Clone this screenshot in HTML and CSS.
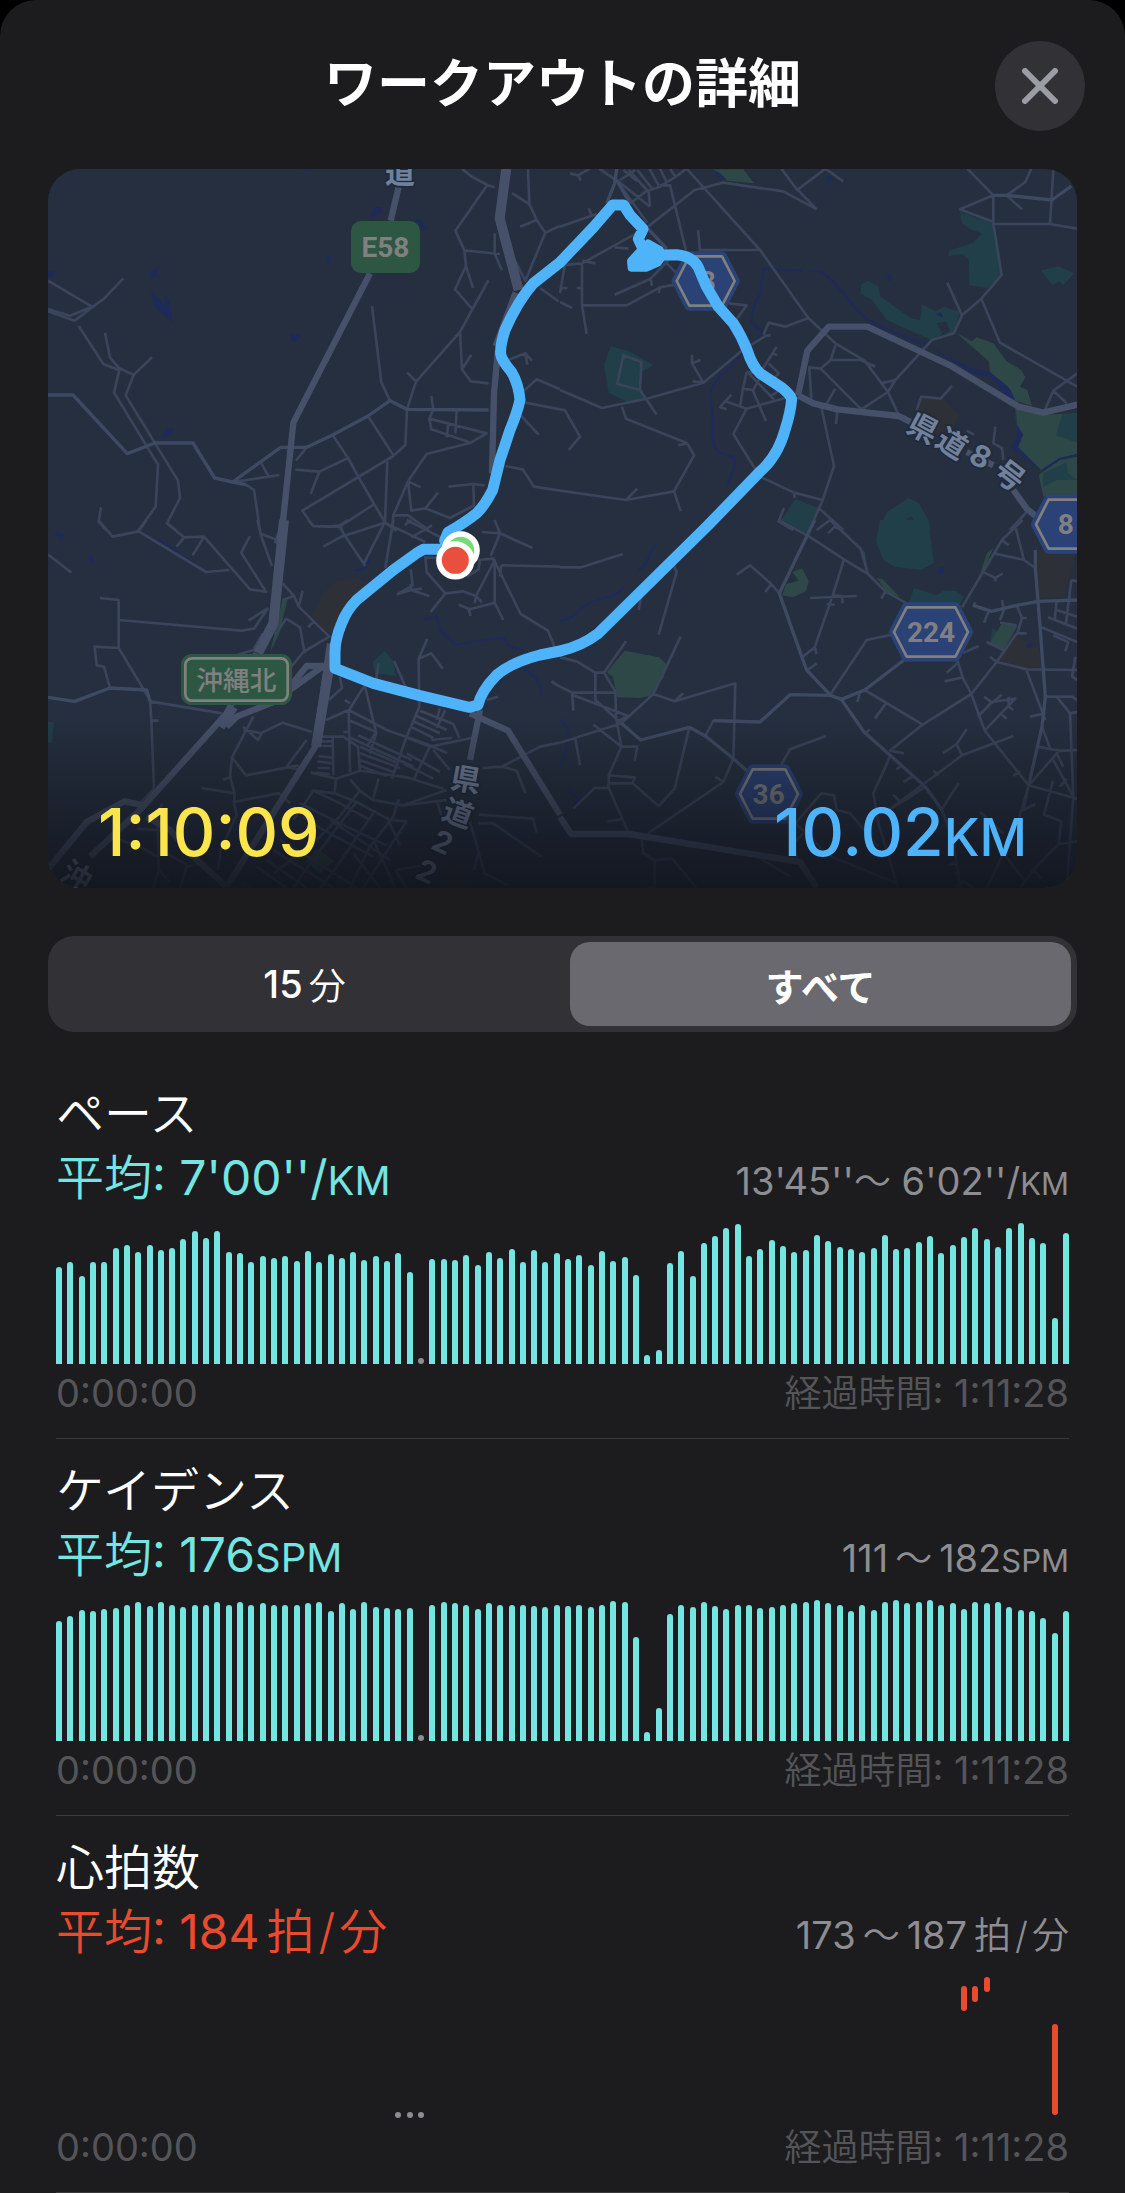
FILE: index.html
```html
<!DOCTYPE html>
<html lang="ja">
<head>
<meta charset="utf-8">
<meta name="viewport" content="width=device-width, initial-scale=1">
<title>ワークアウトの詳細</title>
<link rel="stylesheet" href="styles.css">
</head>
<body>
<main class="sheet">
  <header class="header">
    <h1 class="title">ワークアウトの詳細</h1>
    <button class="close" type="button" aria-label="閉じる">
      <svg viewBox="0 0 36 36" aria-hidden="true"><path d="M3 3 33 33M33 3 3 33"/></svg>
    </button>
  </header>

  <section class="map" aria-label="ルート">
    <svg class="map-art" viewBox="0 0 3087 2157" aria-hidden="true">
      <defs>
        <linearGradient id="shade" x1="0" y1="0" x2="0" y2="1">
          <stop offset="0" stop-color="#10131b" stop-opacity="0"/>
          <stop offset="1" stop-color="#10131b" stop-opacity=".85"/>
        </linearGradient>
      </defs>
      <rect class="land" width="3087" height="2157"/>

      <!-- north-west -->
      <g transform="translate(-24 -27)">
        <path class="water" d="M988 174 1003 142 1024 142 1022 160ZM1128 176 1140 176 1152 196 1168 205 1148 212ZM858 290 868 286 876 308 858 310ZM327 338 358 318 356 330 345 338 358 348 342 350 334 361ZM330 388 342 398 345 410 362 418 380 450 374 406 388 424 397 486 345 440ZM750 518 766 526 778 520 782 530 768 547 754 540ZM24 334 40 332 46 342 36 350 24 350ZM362 834 366 824 386 804 400 808 398 820 378 832ZM788 26 816 26 814 31 792 31Z"/>
        <path class="minor" d="M24 362 156 440 90 467 24 447M24 454 104 482 156 442 192 416 250 355M116 498 190 612 238 631 222 698 354 914 347 1040 290 1118M195 518 210 593 238 625 281 645 257 706 414 962 420 1014 381 1090 410 1112M281 645 336 592M183 1042 176 1085 200 1112M1266 26 1292 48 1342 75 1364 82M1342 75 1246 212 1273 271 1380 282M1273 271 1278 318 1245 388 1296 446M1278 318 1299 384M1345 361 1296 450 1260 516 1128 665 1101 748 1096 855 1060 888 787 1052 820 1098 899 1100 1003 1032M1260 516 1266 628 1292 664 1346 670M1266 628 1294 584M1101 637 1128 664M996 438 1024 667 1050 722 1101 750M984 768 1060 886M878 825 924 894 956 952 1035 1088 1070 1112M924 894 838 935 812 1002M838 935 766 929M768 902 800 862M578 966 686 950 718 945M664 910 686 950M618 974 642 990 660 1112M1042 904 1035 1088M1292 848 1160 882 1104 964 1060 1066 1056 1112M1104 964 1142 982M1104 964 1114 1052 1156 1045 1230 1074 1302 1036 1300 972 1334 976M1300 972 1225 980M1156 1045 1194 998M1060 1066 1104 1066 1166 1110M1174 708 1180 748 1168 776 1340 820 1292 848 1174 808 1168 776M1250 752 1246 820M1225 790 1220 832M1364 220 1364 282 1386 330M1464 26 1468 132 1490 180 1516 218 1456 362 1424 300M1416 100 1468 132M1490 180 1440 200M1516 218 1560 198M1500 384 1556 424M1400 602 1456 580 1476 602M1456 580 1462 614M1452 692 1490 658 1560 688M1456 728 1560 748M1444 768 1496 824M1396 918 1448 928 1482 980 1560 992M899 1100 905 1112"/>
        <path class="medium" d="M24 705 99 705 262 881 345 849 459 849 524 954 578 966 722 862 800 862 878 825 984 768 1050 722 1101 748 1346 750M578 966 618 974"/>
        <path class="major" d="M1076 80 1052 182M990 340 760 788 726 1112"/>
        <path class="trunk" d="M1399 26 1379 175 1436 390M1432 400 1372 560"/>
        <path class="major" d="M1374 570 1362 700 1356 940"/>
      </g>

      <!-- north-east -->
      <g transform="translate(1536 -27)">
        <path class="wood" d="M1200 155 1296 190 1325 345 1284 384 1228 376 1226 296 1206 282 1164 288 1168 272 1240 248 1266 220 1228 206 1206 190ZM1442 332 1494 318 1542 340 1510 376 1498 364 1478 376ZM904 372 924 362 956 380 960 408 1004 440 1056 476 1080 480 1086 432 1126 454 1152 440 1200 456 1182 520 1150 522 1114 540 980 480 936 420 902 400ZM152 558 208 574 280 616 240 640 238 690 262 712 200 726 146 698 132 614ZM706 1016 776 1044 752 1110 664 1080ZM956 1110 980 1056 1046 1014 1076 1028 1108 1086 1110 1110Z"/>
        <path class="grass" d="M458 28 550 28 582 70 500 62ZM1190 520 1236 544 1250 532 1300 550 1340 604 1384 630 1396 652 1380 680 1402 690 1416 738 1366 722 1344 680 1290 636 1286 604ZM1366 746 1452 764 1552 760 1552 880 1496 900 1446 932 1374 862 1386 824 1368 790ZM1436 944 1500 900 1552 890 1552 1010 1450 1010Z"/>
        <path class="wood" d="M1506 764 1552 760 1552 848 1488 826ZM1450 940 1520 906 1524 940 1552 960 1490 960 1450 980Z"/>
        <path class="urban" d="M1080 708 1150 718 1200 764 1180 800 1140 830 1080 780Z"/>
        <path class="land" d="M1130 490 1158 484 1170 512 1148 524ZM1040 1076 1054 1068 1072 1110 1044 1110Z"/>
        <path class="stream" d="M610 325 726 332M748 332 784 336C840 370 870 440 920 476S1050 530 1100 558M610 325 602 400 584 430 572 484 610 518 520 610C480 650 450 670 452 720 470 800 440 850 480 880L522 892 524 920 502 974M1446 932 1500 896 1550 886"/>
        <path class="water" d="M1098 556 1240 628 1286 634 1352 690 1366 722 1344 712 1290 650 1236 638ZM1368 750 1368 790 1390 824 1374 862 1440 930 1396 896 1354 858 1372 832ZM1128 464 1142 456 1150 472ZM980 342 992 342 992 362 982 362ZM796 60 808 46 816 56 804 70ZM460 28 480 40 502 60 480 52Z"/>
        <path class="minor" d="M30 40 54 46 90 26M54 46 62 62M0 200 110 162M86 144 94 164M118 26 170 62 262 188M180 60 226 30M170 60 270 140M190 30 232 64M206 30 266 96 270 140M232 30 275 84M268 26 296 76M300 26 320 66M330 26 346 50M210 130 258 94 300 80 350 48 380 26M300 76 330 76 378 272M264 200 404 90 490 68 670 94 770 148M380 26 600 270 745 474 826 550 914 602 984 696 1016 766M664 26 712 90 796 26 850 64M712 88 770 148M414 210 420 270 600 270M0 316 66 310 240 214M66 310 66 436 200 436 300 382 346 374M66 436 80 522M164 262 206 266M66 302 106 310M300 290 350 340M326 300 272 356 164 404M272 356 276 378M300 382 296 400M14 318 0 400M0 384 22 384M50 384 66 384M0 426 36 444M506 430 560 436 528 480M620 526 545 572 430 668 260 716 126 744 0 690M430 668 396 610 422 600M396 584 396 610M398 664 430 668M190 586 244 606 240 690 172 672ZM240 690 290 764M186 740 198 776 382 850 402 886 342 994 362 1054M354 856 382 850M342 994 198 1020 0 992M198 1020 232 986M0 748 14 750 60 830 26 870M620 526 632 526M610 524 626 488 676 500 745 474M560 636 548 690 540 742M560 636 600 640 650 560M640 580 652 586M626 610 656 640 632 664M566 640 642 718M478 744 514 704M480 742 500 748M496 724 560 746 690 710M560 746 520 822 600 950 702 998 788 1020 822 918 784 742M578 690 618 784M546 686 580 690 600 652M630 710 660 690M702 998 704 1014M788 1020 748 1110M776 1044 850 1110M672 1044 656 1084 700 1110M826 556 812 600 782 626 904 748 984 696 1006 660 964 670M812 600 902 600 946 620M782 626 748 622 754 716M826 686 796 738M832 750 828 792M1006 660 1116 540 1182 520 1206 466 1264 416 1325 345 1300 192 1300 106 1222 26M1206 466 1162 368M1300 106 1200 148 1300 186M1264 416 1320 548 1552 680M1300 192 1470 192 1552 206M1470 192 1480 30M1340 106 1396 66 1414 26M1340 106 1386 148M1070 750 1084 710 1142 716 1176 678M1450 760 1480 692 1552 640M1480 692 1520 730M1306 800 1300 850 1326 864 1330 900M1220 812 1242 824M1400 1056 1350 1110M820 1100 850 1110"/>
        <path class="medium" d="M1300 106 1340 106 1476 120 1534 78M170 26 164 70 140 130M170 60 210 130M264 206 320 266"/>
        <path class="major" d="M714 706 742 572 806 500 922 500 1170 616 1376 740 1450 758 1552 734M714 706 760 730 832 748 1016 768 1080 800M1220 876 1300 916M1360 990 1400 1046 1430 1070"/>
      </g>

      <!-- south-west -->
      <g transform="translate(-24 1053)">
        <path class="urban" d="M814 290 850 220 890 182 950 174 990 196 930 250 880 340 850 330Z"/>
        <path class="wood" d="M998 426 1034 392 1060 424 1068 468 1004 460ZM24 606 42 606 36 668 24 668ZM570 1104 610 1080 640 1104Z"/>
        <path class="grass" d="M728 234 742 240 716 346 690 396 704 340ZM796 1024 832 986 882 1022 840 1062Z"/>
        <path class="urban" d="M1200 1104 1210 1050 1240 1036 1290 1104Z"/>
        <path class="water" d="M44 46 52 36 72 46 66 60ZM144 108 154 106 162 128 152 132ZM970 138 990 118 992 126 978 144Z"/>
        <path class="stream" d="M354 58 500 156M942 152 980 144M1152 298 1190 290 1200 330 1246 374 1390 352 1404 376 1450 392M1450 446C1490 470 1506 490 1504 526"/>
        <path class="minor" d="M24 104 94 158M174 0 218 50 296 34 320 0M296 34 498 156 568 150M378 8 432 52 492 50 630 208 682 216M432 52 410 80M492 50 458 106M652 0 664 50 696 138M664 42 706 58M630 48 604 98 676 212M180 234 236 240 236 384 330 540 334 600 342 806 300 850M236 300 604 332 642 326 684 264M626 302 684 264M236 384 164 380 170 436 192 440 210 504M330 544 546 580M334 602 356 602M804 0 820 18 870 20 900 16 910 40 976 138M900 16 924 0M1034 8 900 52 850 80M1034 8 972 130M1034 8 1156 66M1060 0 1036 144M1094 16 1114 0M1114 52 1176 16M1100 0 1210 56M728 190 762 228 776 260 868 350 790 396 754 440M762 228 728 240M776 260 788 212M804 322 822 304M738 296 780 322 794 400M706 346 738 296M668 340 640 390 594 404M900 470 906 504 866 540M610 620 654 660 666 638 728 608 816 636M664 640 610 630M640 590 576 712 570 770 584 820 582 850 590 884 542 990 534 1050M576 712 618 766 776 736M800 660 740 740 780 750M550 780 576 768M484 804 584 820M582 846 716 820 750 850M366 852 352 886 356 1050 340 1104M356 1050 388 1084M290 926 370 932M1156 108 1160 156 1216 220 1268 214 1308 228 1326 248M1216 220 1172 276M1112 148 1118 196 1074 222 1112 210 1168 228M1112 210 1112 192M1112 210 1146 206M1256 254 1290 268 1364 248 1364 120 1308 228 1304 250M1286 268 1292 288M1364 248 1390 300M1156 112 1230 116M1310 120 1364 116M1364 0 1380 40 1352 108M1326 36 1380 40 1478 84M1358 112 1442 282 1524 332 1546 386M1384 136 1560 140M1384 136 1380 170M1320 120 1316 148 1280 170M1162 356 1136 416 1138 560 1096 660M1136 416 1174 400 1208 446M1062 422 1098 504M1016 430 1008 480M974 496 926 572 930 756M974 496 1008 636 980 680M858 600 926 570 1040 630 1160 672 1222 700M926 600 1008 636M914 540 930 550M910 636 926 636M930 652 1010 690 1120 740M954 646 1116 720M840 650 910 650 954 680 960 754M878 650 880 766M840 664 878 664M840 678 878 678M836 708 878 714M832 724 874 730M832 744 870 744M826 758 870 762M960 680 1070 728M960 700 1080 744M960 720 1060 756M956 736 1040 768M1096 660 1056 776M1010 636 990 700M1140 572 1240 612 1258 654M1130 588 1220 630M1120 604 1200 640M1112 620 1180 654M1200 564 1190 600M1216 570 1190 624M1104 654 1170 680 1296 654M1170 680 1120 780M1174 660 1236 654M1180 690 1230 750M1100 700 1200 756M1090 730 1180 776M812 758 888 776 960 752 1100 772 1210 806M888 776 884 820 820 812 760 900M884 820 950 846 1050 900 1100 904M930 778 960 812 998 840 1090 856 1220 840M998 840 1016 776M1090 856 1220 810M1076 838 1060 890 990 980 930 1104M960 812 890 900 820 970 700 1060M950 846 870 950 790 1060 760 1104M1000 880 890 1040 840 1104M820 812 900 850 990 900M780 850 900 910 1040 976M790 890 850 930 1000 1010M870 900 1050 1020M720 960 820 1020 950 1104M700 990 880 1104M680 1020 800 1104M650 1040 740 1104M1100 904 1030 1010 970 1104M1040 890 1080 976M1000 960 1066 1104M940 1000 1020 1104M1328 744 1386 740 1500 680 1560 668M1386 740 1430 752 1456 820M1290 906 1316 996 1302 1050M1316 884 1478 896 1490 938M1316 910 1360 910 1504 1010M1316 996 1334 1060 1404 1096M1190 840 1204 886M1340 540 1374 530M1534 484 1560 500M1070 1050 1180 1030M1066 1050 1100 1104M420 1104 440 1040 480 1030M380 1000 440 1034M240 960 300 980 350 1010"/>
        <path class="medium" d="M24 532 104 544 210 504 320 510 330 544M730 0 706 70"/>
        <path class="major" d="M560 620 590 590 700 546 850 438 800 438 740 512M870 370 826 680 560 1100M730 0 700 300 660 396M650 400 560 580 300 870 150 1010M24 1048 140 906 254 844 310 856M320 890 390 930 460 1010 560 1100M1320 570 1290 720M1290 580 1404 632 1560 884"/>
        <path class="trunk" d="M732 0 700 310 654 400M580 560 540 620M866 450 828 680"/>
      </g>

      <!-- south-east -->
      <g transform="translate(1536 1053)">
        <path class="wood" d="M668 0 760 0 742 42ZM960 0 1104 0 1122 128 1084 150 1004 140 970 120 948 64ZM1062 204 1130 226 1150 212 1186 212 1212 230 1196 256 1046 250ZM1296 324 1320 340 1290 370Z"/>
        <path class="grass" d="M194 392 298 412 318 432 312 470 270 528 240 534 172 532 158 470 140 456ZM698 156 726 144 746 184 738 214 700 232 666 226 678 192 716 182ZM950 174 966 176 1020 232 980 216ZM1326 310 1372 318 1330 392 1288 372ZM1280 100 1300 84 1250 196ZM900 86 914 96 924 160Z"/>
        <path class="urban" d="M1428 90 1552 84 1510 232 1434 232ZM1370 350 1438 386 1444 444 1384 440 1312 420Z"/>
        <path class="water" d="M1138 142 1152 142 1150 160 1136 162ZM1400 370 1416 374 1418 384 1400 384Z"/>
        <path class="stream" d="M0 302C50 300 50 260 100 244S170 230 190 202M236 150C280 120 260 90 290 76M0 600C40 620 20 700 0 740M20 806 56 836 40 860M1526 1050 1530 1000 1552 994"/>
        <path class="minor" d="M0 142 64 142 188 102M340 132 350 156 296 344M246 220 236 270M198 364 132 458 166 514 168 590 184 680 146 766 146 804 206 940M0 412 50 424 106 458 132 458M106 458 106 540 184 610M0 500 36 518 166 518M36 518 40 572M36 524 204 588 168 606M100 614 184 680 232 680 224 722M362 350 280 522 184 610 0 668M280 522 344 544 526 490 520 716 490 786 264 940M344 544 370 520M46 656 60 736M388 622 344 806 296 858 218 790 146 790M146 766 224 772 218 790M40 866 104 804 146 804M142 904 184 898M436 648 460 602 600 606M490 786 466 770M664 734 690 688 798 648M530 164 570 136 634 192 658 220M634 192 616 216M656 0 742 46 852 118 924 162M852 118 818 226 764 382 726 412M750 234 890 228M818 226 846 228 848 250M800 252 824 254M764 382 770 402M812 522 920 360 996 344M740 452 770 430M804 40 830 14M770 30 810 0 902 86 924 162 976 214 1040 250M976 214 964 236M892 546 900 516 914 510 1088 614 1234 522 1310 426 1400 448 1552 450M978 550 944 596M1088 614 990 692 1032 700M990 710 940 820 956 912 1014 1104M1154 484 1208 472M1160 458 1192 430M1192 420 1208 472 1234 522 1274 632 1406 796 1376 900M1406 796 1552 836M1254 590 1296 546 1366 536 1274 632M1272 530 1296 548 1326 524M1346 530 1346 560 1360 570M1326 584 1340 596M1190 672 1220 628M1148 700 1190 672 1206 706 1360 648M1206 706 986 870M1120 752 1136 766M1196 790 1144 870M916 640 930 628M1010 748 1026 736M1030 786 1060 768M1000 824 1020 846M986 870 1060 824 1096 800M1388 0 1326 60 1206 262M1326 60 1346 76M1366 20 1392 120 1426 144M1302 100 1392 120M1270 156 1306 174 1328 160M1306 174 1306 184M1240 260 1246 246M1272 308 1286 274M1326 240 1332 270 1320 300M1370 256 1386 294 1372 340 1400 340M1386 294 1400 294M1320 308 1370 316M1290 410 1310 426 1370 340M1280 366 1330 390M1210 398 1256 378M1440 320 1552 366M1480 346 1524 366 1516 394M1464 292 1552 326M1490 240 1484 300M1534 180 1518 310M1490 270 1552 290M1534 180 1552 184M1400 452 1456 600M1456 530 1536 530 1552 540M1490 530 1530 580 1552 576M1410 590 1456 580M1530 580 1540 830 1520 1104M1430 680 1498 692 1552 690M1498 692 1406 796M1480 720 1540 830M1500 800 1520 776M1446 620 1470 684M1406 796 1390 870 1426 852M1478 784 1452 884 1504 904 1496 972 1420 1050 1380 1104M1552 964 1496 972M1376 900 1330 1000 1280 1104M1330 1000 1396 1084M1420 1050 1444 1076M1260 876 1330 940M1146 870 1180 960 1200 1104M1166 1036 1190 1026M1184 1100 1210 1084 1240 1104M1184 1060 1200 1060M706 910 784 820 822 826 830 870 870 880 956 980M706 910 760 960 800 1004 1010 1090M730 940 700 970 712 1020M244 950 250 1000 284 1020 284 1104 262 1104M284 1020 336 1016 410 1104M600 1016 692 1070M1360 768 1380 754M1546 410 1536 470 1552 480M1490 700 1510 740"/>
        <path class="medium" d="M764 0 658 220 726 412 740 450 812 526 844 538 912 636 1060 768 1096 800 1146 870M812 526 690 524 600 606 460 602M844 538 914 510 1040 414M184 610 242 660 388 622 436 648 520 716 560 752M1240 256 1294 274 1370 256 1434 244 1552 240M1426 90 1426 144 1440 320 1456 530 1446 620 1406 796"/>
        <path class="major" d="M0 892 34 942 206 942 720 1026 770 1104"/>
      </g>

      <g class="road-name">
        <text x="1056" y="42" text-anchor="middle">道</text>
        <text transform="translate(2625 778) rotate(28)" text-anchor="middle" dy="32">県</text>
        <text transform="translate(2712 824) rotate(32)" text-anchor="middle" dy="32">道</text>
        <text transform="translate(2798 862) rotate(28)" text-anchor="middle" dy="32">8</text>
        <text transform="translate(2884 920) rotate(38)" text-anchor="middle" dy="32">号</text>
        <text transform="translate(1254 1832) rotate(10)" text-anchor="middle" dy="32">県</text>
        <text transform="translate(1230 1934) rotate(20)" text-anchor="middle" dy="32">道</text>
        <text transform="translate(1184 2020) rotate(25)" text-anchor="middle" dy="32">2</text>
        <text transform="translate(1136 2108) rotate(25)" text-anchor="middle" dy="32">2</text>
        <text transform="translate(86 2122) rotate(30)" text-anchor="middle" dy="32">沖</text>
      </g>

      <g class="shield-green">
        <rect x="909" y="156" width="207" height="156" rx="30"/>
        <text x="1012" y="265">E58</text>
        <rect x="399" y="1455" width="333" height="153" rx="32"/>
        <rect class="frame" x="412" y="1468" width="307" height="127" rx="20"/>
        <text class="place" x="565" y="1562">沖縄北</text>
      </g>
      <g class="shield-blue">
        <path class="edge" d="M1924 262H2022L2060 336 2022 410H1924L1886 336Z"/>
        <path d="M1924 262H2022L2060 336 2022 410H1924L1886 336Z"/>
        <text x="1979" y="366">8</text>
        <path class="edge" d="M3002 992H3122L3160 1066 3122 1139H3002L2964 1066Z"/>
        <path d="M3002 992H3122L3160 1066 3122 1139H3002L2964 1066Z"/>
        <text x="3053" y="1094">8</text>
        <path class="edge" d="M2576 1315H2722L2760 1389 2722 1463H2576L2538 1389Z"/>
        <path d="M2576 1315H2722L2760 1389 2722 1463H2576L2538 1389Z"/>
        <text x="2649" y="1419">224</text>
        <path class="edge" d="M2114 1801H2212L2250 1875 2212 1949H2114L2076 1875Z"/>
        <path d="M2114 1801H2212L2250 1875 2212 1949H2114L2076 1875Z"/>
        <text x="2162" y="1904">36</text>
      </g>

      <path class="route" d="M1200 1142 1181 1140 1126 1141 1110 1150 1036 1203 926 1293Q895 1325 881 1363 861 1410 861 1450L861 1498 976 1543 1116 1580 1264 1615 1290 1608Q1300 1565 1346 1518 1390 1480 1476 1458L1536 1446Q1600 1432 1650 1394L1976 1073 2136 908Q2190 860 2211 783 2228 730 2231 690 2226 676 2200 655L2136 613Q2112 590 2098 545 2080 500 2056 463L2011 413 1974 350 1950 293Q1932 262 1888 257L1830 258 1790 250 1771 210 1785 180 1746 138 1727 108 1694 108 1636 175 1536 280 1456 343Q1410 395 1371 483 1356 530 1358 555 1360 572 1390 608 1412 645 1416 693 1408 730 1386 783L1356 873 1334 963Q1310 1010 1286 1033 1250 1062 1200 1090L1190 1115"/>
      <path class="blob" d="M1800 222 1836 242 1844 262 1830 282 1796 297 1750 297 1748 276 1772 250Z"/>
      <rect y="1640" width="3087" height="517" fill="url(#shade)"/>
      <g class="pin">
        <circle class="start" cx="1238" cy="1144" r="49"/>
        <circle class="finish" cx="1222" cy="1174" r="49"/>
      </g>
    </svg>
    <div class="map-stats">
      <span class="duration">1:10:09</span>
      <span class="distance">10.02<span class="unit">KM</span></span>
    </div>
  </section>

  <div class="segments" role="group" aria-label="表示範囲">
    <button type="button" class="segment" aria-pressed="false"><span>15</span><span class="kanji">分</span></button>
    <button type="button" class="segment selected" aria-pressed="true">すべて</button>
  </div>

  <section class="metric teal">
    <h2 class="name">ペース</h2>
    <div class="summary">
      <p class="average">平均<span class="value">: 7'00''/<span class="unit">KM</span></span></p>
      <p class="range">13'45''<span class="kanji">〜</span> 6'02''/<span class="unit">KM</span></p>
    </div>
    <div class="chart" data-series="pace"></div>
    <div class="times"><span>0:00:00</span><span><span class="kanji">経過時間</span>: 1:11:28</span></div>
  </section>

  <section class="metric teal">
    <h2 class="name">ケイデンス</h2>
    <div class="summary">
      <p class="average">平均<span class="value">: 176<span class="unit">SPM</span></span></p>
      <p class="range">111<span class="kanji wave">〜</span>182<span class="unit">SPM</span></p>
    </div>
    <div class="chart" data-series="cadence"></div>
    <div class="times"><span>0:00:00</span><span><span class="kanji">経過時間</span>: 1:11:28</span></div>
  </section>

  <section class="metric red">
    <h2 class="name">心拍数</h2>
    <div class="summary">
      <p class="average">平均<span class="value">: 184</span><span class="per">拍<span class="slash">/</span>分</span></p>
      <p class="range">173<span class="kanji wave">〜</span>187<span class="kanji per">拍<span class="slash">/</span>分</span></p>
    </div>
    <div class="chart" data-series="heart"></div>
    <div class="times"><span>0:00:00</span><span><span class="kanji">経過時間</span>: 1:11:28</span></div>
  </section>
</main>
<script src="charts.js"></script>
</body>
</html>
```

FILE: styles.css
```css
* { box-sizing: border-box; }

body {
  margin: 0;
  background: #000;
  color: #fff;
  font-family: Inter, "Noto Sans CJK JP", sans-serif;
}

button {
  border: 0;
  padding: 0;
  color: inherit;
  font: inherit;
  cursor: pointer;
}

h1, h2, p { margin: 0; font-weight: 400; }

.sheet {
  overflow: hidden;
  border-radius: 36px 36px 0 0;
  background: #1c1c1e;
}

.header {
  display: grid;
  grid-template-columns: 90px 1fr 90px;
  align-items: center;
  padding: 41px 40px 38px;
}

.title {
  grid-column: 2;
  text-align: center;
  font-size: 53px;
  line-height: 82px;
  font-weight: 700;
  padding-bottom: 4px;
}

.close {
  display: grid;
  place-items: center;
  width: 90px;
  height: 90px;
  border-radius: 50%;
  background: #313136;
}

.close svg {
  width: 36px;
  height: 36px;
  fill: none;
  stroke: #9d9da5;
  stroke-width: 6;
  stroke-linecap: round;
}

.map {
  position: relative;
  margin: 0 48px;
  border-radius: 32px;
  overflow: hidden;
}

.map-art { display: block; width: 100%; }

.land { fill: #252f3f; }
.wood { fill: #203f48; }
.grass { fill: #2d4846; }
.urban { fill: #2e3038; }
.water { fill: #1e2a5c; }

.stream, .minor, .medium, .major, .trunk, .route {
  fill: none;
  stroke-linejoin: round;
}

.stream { stroke: #1e2a5c; stroke-width: 6; }
.minor { stroke: #3a445a; stroke-width: 8; }
.medium { stroke: #3e4a62; stroke-width: 10; }
.major { stroke: #465169; stroke-width: 19; }
.trunk { stroke: #465169; stroke-width: 30; }

.route { stroke: #4fb3fa; stroke-width: 33; stroke-linecap: round; }
.blob { fill: #4fb3fa; stroke: #4fb3fa; stroke-width: 22; stroke-linejoin: round; }

.road-name {
  fill: #71809b;
  stroke: #222b3c;
  stroke-width: 12;
  stroke-linejoin: round;
  paint-order: stroke;
  font-size: 90px;
  font-weight: 700;
}

.shield-green rect { fill: #2d5743; }
.shield-green .frame { stroke: #808180; stroke-width: 8; }

.shield-green text, .shield-blue text {
  fill: #808081;
  font: 700 84px "Liberation Sans Narrow", Roboto, sans-serif;
  text-anchor: middle;
}

.shield-green .place { font: 500 80px "Noto Sans CJK JP", sans-serif; }

.shield-blue path {
  fill: #2b4277;
  stroke: #808081;
  stroke-width: 8;
  stroke-linejoin: round;
}

.shield-blue .edge { stroke: #2b4277; stroke-width: 30; }

.pin circle { stroke: #fff; stroke-width: 17; }
.start { fill: #77da75; }
.finish { fill: #ea4e3d; }

.map-stats {
  position: absolute;
  inset: auto 0 0;
  display: flex;
  justify-content: space-between;
  align-items: baseline;
  padding: 0 50px 10px;
  font-size: 66px;
  line-height: 80px;
  font-weight: 500;
}

.map-stats .unit { font-size: 52px; }
.duration { color: #fbe54d; }
.distance { color: #4fb3fa; }

.segments {
  display: grid;
  grid-template-columns: 1fr 1fr;
  gap: 15px;
  margin: 48px 48px 30px;
  padding: 6px;
  border-radius: 26px;
  background: #313136;
}

.segment {
  display: flex;
  justify-content: center;
  align-items: center;
  gap: 6px;
  height: 84px;
  border-radius: 20px;
  background: none;
  font-size: 38px;
  font-weight: 500;
}

.segment.selected { background: #69696f; font-weight: 700; }

.metric {
  margin: 0 56px;
  padding: 21px 0;
  border-bottom: 1px solid #3a3a3c;
}

.teal { --accent: #75e5e2; }
.red { --accent: #ea4a2d; }

.name { font-size: 48px; line-height: 61px; font-weight: 350; }

.summary {
  display: flex;
  justify-content: space-between;
  align-items: baseline;
  height: 61px;
  padding-top: 3px;
  line-height: 61px;
}

.average { color: var(--accent); font-size: 48px; font-weight: 350; }
.value { font-size: 48px; font-weight: 400; }
.value .unit { font-size: 40px; }

.range { color: #8d8d92; font-size: 38px; }
.range .unit { font-size: 31px; }

.kanji { font-size: 37px; font-weight: 350; }
.wave { margin: 0 7px; }
.per { margin-left: 7px; }
.slash { margin: 0 4px; }

.chart {
  display: flex;
  justify-content: space-between;
  align-items: flex-end;
  height: 141px;
  margin-top: 18px;
}

.bar {
  width: 6px;
  border-radius: 3px 3px 0 0;
  background: var(--accent);
}

.bar.floating { border-radius: 3px; }

.bar.paused {
  height: 6px;
  border-radius: 50%;
  background: #8d8d92;
}

.bar.empty { height: 0; }

.times {
  display: flex;
  justify-content: space-between;
  height: 53px;
  padding-top: 5px;
  color: #555559;
  font-size: 38px;
  line-height: 48px;
}
```

FILE: charts.js
```js
// One entry per time slot: a bar height, "p" for a pause, [bottom, height] for a range, null for no data.
const series = {
  pace: [
    97, 102, 88, 102, 102, 116, 119, 112, 119, 114, 116, 125, 133, 126, 133, 112, 111, 102,
    108, 106, 108, 103, 113, 102, 110, 106, 112, 104, 108, 103, 111, 92, "p", 105, 105, 104,
    109, 99, 112, 106, 115, 102, 114, 102, 111, 105, 109, 99, 113, 103, 107, 89, 9, 14,
    101, 113, 88, 121, 128, 136, 140, 108, 115, 124, 118, 112, 114, 129, 123, 117, 115, 112,
    116, 129, 115, 116, 122, 128, 111, 119, 127, 136, 125, 117, 136, 141, 126, 121, 46, 131
  ],
  cadence: [
    120, 125, 131, 130, 132, 133, 136, 139, 135, 139, 136, 134, 136, 136, 139, 136, 139, 136,
    138, 136, 136, 136, 138, 139, 130, 138, 132, 139, 134, 133, 132, 133, "p", 136, 139, 138,
    136, 132, 138, 136, 136, 136, 135, 134, 136, 135, 136, 134, 136, 140, 139, 104, 9, 33,
    127, 136, 134, 139, 135, 132, 136, 136, 133, 134, 136, 138, 139, 141, 138, 136, 130, 136,
    131, 139, 141, 138, 139, 141, 136, 138, 132, 139, 138, 139, 134, 131, 130, 123, 108, 130
  ],
  heart: Object.assign(Array(90).fill(null), {
    30: "p", 31: "p", 32: "p",
    80: [107, 25], 81: [116, 16], 82: [126, 15], 88: [3, 91]
  })
};

for (const chart of document.querySelectorAll(".chart")) {
  for (const slot of series[chart.dataset.series]) {
    const bar = document.createElement("span");
    bar.className = "bar";
    if (slot === "p") {
      bar.classList.add("paused");
    } else if (slot === null) {
      bar.classList.add("empty");
    } else if (Array.isArray(slot)) {
      bar.classList.add("floating");
      bar.style.marginBottom = `${slot[0]}px`;
      bar.style.height = `${slot[1]}px`;
    } else {
      bar.style.height = `${slot}px`;
    }
    chart.append(bar);
  }
}
```
